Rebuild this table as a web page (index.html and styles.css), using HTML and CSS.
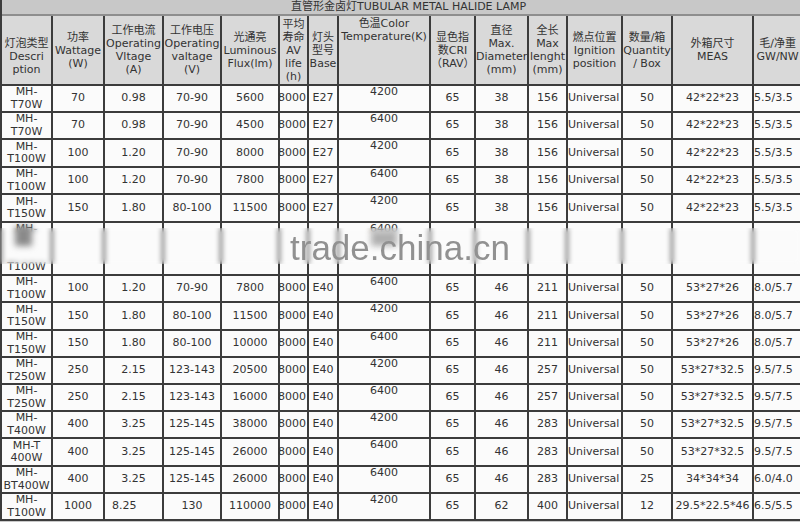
FILE: index.html
```html
<!DOCTYPE html>
<html>
<head>
<meta charset="utf-8">
<link rel="stylesheet" href="styles.css">
</head>
<body>
<div class="sheet">
<table class="spec">
<colgroup>
<col class="c1"><col class="c2"><col class="c3"><col class="c4"><col class="c5"><col class="c6"><col class="c7"><col class="c8"><col class="c9"><col class="c10"><col class="c11"><col class="c12"><col class="c13"><col class="c14"><col class="c15">
</colgroup>
<tr class="r-title"><td class="ttl" colspan="15">直管形金卤灯TUBULAR METAL HALIDE LAMP</td></tr>
<tr class="r-head">
<td class="hd"><br>灯泡类型<br>Descri<br>ption</td>
<td class="hd">功率<br>Wattage<br>(W)</td>
<td class="hd">工作电流<br>Operating<br>Vltage<br>(A)</td>
<td class="hd">工作电压<br>Operating<br>valtage<br>(V)</td>
<td class="hd">光通亮<br>Luminous<br>Flux(lm)</td>
<td class="hd">平均<br>寿命<br>AV<br>life<br>(h)</td>
<td class="hd">灯头<br>型号<br>Base</td>
<td class="hd top">色温Color<br>Temperature(K)</td>
<td class="hd">显色指<br>数CRI<br>（RAV）</td>
<td class="hd">直径<br>Max.<br>Diameter<br>(mm)</td>
<td class="hd">全长<br>Max<br>lenght<br>(mm)</td>
<td class="hd">燃点位置<br>Ignition<br>position</td>
<td class="hd">数量/箱<br>Quantity<br>/ Box</td>
<td class="hd">外箱尺寸<br>MEAS</td>
<td class="hd">毛/净重<br>GW/NW</td>
</tr>
<tr class="h27"><td>MH-<br>T70W</td><td>70</td><td>0.98</td><td>70-90</td><td>5600</td><td class="life">8000</td><td>E27</td><td class="top">4200</td><td>65</td><td>38</td><td>156</td><td class="ign">Universal</td><td>50</td><td>42*22*23</td><td class="gw">5.5/3.5</td></tr>
<tr class="h27"><td>MH-<br>T70W</td><td>70</td><td>0.98</td><td>70-90</td><td>4500</td><td class="life">8000</td><td>E27</td><td class="top">6400</td><td>65</td><td>38</td><td>156</td><td class="ign">Universal</td><td>50</td><td>42*22*23</td><td class="gw">5.5/3.5</td></tr>
<tr class="h28"><td>MH-<br>T100W</td><td>100</td><td>1.20</td><td>70-90</td><td>8000</td><td class="life">8000</td><td>E27</td><td class="top">4200</td><td>65</td><td>38</td><td>156</td><td class="ign">Universal</td><td>50</td><td>42*22*23</td><td class="gw">5.5/3.5</td></tr>
<tr class="h27"><td>MH-<br>T100W</td><td>100</td><td>1.20</td><td>70-90</td><td>7800</td><td class="life">8000</td><td>E27</td><td class="top">6400</td><td>65</td><td>38</td><td>156</td><td class="ign">Universal</td><td>50</td><td>42*22*23</td><td class="gw">5.5/3.5</td></tr>
<tr class="h28"><td>MH-<br>T150W</td><td>150</td><td>1.80</td><td>80-100</td><td>11500</td><td class="life">8000</td><td>E27</td><td class="top">4200</td><td>65</td><td>38</td><td>156</td><td class="ign">Universal</td><td>50</td><td>42*22*23</td><td class="gw">5.5/3.5</td></tr>
<tr class="h53"><td class="top">MH-<br><br><br>T100W</td><td></td><td></td><td></td><td></td><td></td><td></td><td class="top">6400</td><td></td><td></td><td></td><td></td><td></td><td></td><td></td></tr>
<tr class="h27"><td>MH-<br>T100W</td><td>100</td><td>1.20</td><td>70-90</td><td>7800</td><td class="life">8000</td><td>E40</td><td class="top">6400</td><td>65</td><td>46</td><td>211</td><td class="ign">Universal</td><td>50</td><td>53*27*26</td><td class="gw">8.0/5.7</td></tr>
<tr class="h28"><td>MH-<br>T150W</td><td>150</td><td>1.80</td><td>80-100</td><td>11500</td><td class="life">8000</td><td>E40</td><td class="top">4200</td><td>65</td><td>46</td><td>211</td><td class="ign">Universal</td><td>50</td><td>53*27*26</td><td class="gw">8.0/5.7</td></tr>
<tr class="h27"><td>MH-<br>T150W</td><td>150</td><td>1.80</td><td>80-100</td><td>10000</td><td class="life">8000</td><td>E40</td><td class="top">6400</td><td>65</td><td>46</td><td>211</td><td class="ign">Universal</td><td>50</td><td>53*27*26</td><td class="gw">8.0/5.7</td></tr>
<tr class="h27"><td>MH-<br>T250W</td><td>250</td><td>2.15</td><td>123-143</td><td>20500</td><td class="life">8000</td><td>E40</td><td class="top">4200</td><td>65</td><td>46</td><td>257</td><td class="ign">Universal</td><td>50</td><td>53*27*32.5</td><td class="gw">9.5/7.5</td></tr>
<tr class="h27"><td>MH-<br>T250W</td><td>250</td><td>2.15</td><td>123-143</td><td>16000</td><td class="life">8000</td><td>E40</td><td class="top">6400</td><td>65</td><td>46</td><td>257</td><td class="ign">Universal</td><td>50</td><td>53*27*32.5</td><td class="gw">9.5/7.5</td></tr>
<tr class="h27"><td>MH-<br>T400W</td><td>400</td><td>3.25</td><td>125-145</td><td>38000</td><td class="life">8000</td><td>E40</td><td class="top">4200</td><td>65</td><td>46</td><td>283</td><td class="ign">Universal</td><td>50</td><td>53*27*32.5</td><td class="gw">9.5/7.5</td></tr>
<tr class="h28"><td>MH-T<br>400W</td><td>400</td><td>3.25</td><td>125-145</td><td>26000</td><td class="life">8000</td><td>E40</td><td class="top">6400</td><td>65</td><td>46</td><td>283</td><td class="ign">Universal</td><td>50</td><td>53*27*32.5</td><td class="gw">9.5/7.5</td></tr>
<tr class="h27"><td>MH-<br>BT400W</td><td>400</td><td>3.25</td><td>125-145</td><td>26000</td><td class="life">8000</td><td>E40</td><td class="top">6400</td><td>65</td><td>46</td><td>283</td><td class="ign">Universal</td><td>25</td><td>34*34*34</td><td class="gw">6.0/4.0</td></tr>
<tr class="h27"><td>MH-<br>T100W</td><td>1000</td><td class="lft">8.25</td><td>130</td><td>110000</td><td class="life">8000</td><td>E40</td><td class="top">4200</td><td>65</td><td>62</td><td>400</td><td class="ign">Universal</td><td>12</td><td>29.5*22.5*46</td><td class="gw">6.5/5.5</td></tr>
</table>
<div class="smudge"></div>
<div class="blob blob-a"></div>
<div class="blob blob-b"></div>
<div class="watermark">trade.china.cn</div>
</div>
</body>
</html>
```
FILE: styles.css
```css
html, body {
  margin: 0;
  padding: 0;
}
body {
  background: #c9c9c9;
  overflow: hidden;
  font-family: "DejaVu Sans", "Noto Sans CJK SC", sans-serif;
  font-size: 11px;
  color: #333;
}
.sheet {
  position: relative;
  width: 803px;
}
.spec {
  table-layout: fixed;
  border-collapse: separate;
  border-spacing: 0;
  width: 803px;
  border-left: 2px solid #3c3c3c;
}
.c1 { width: 51px; }
.c2 { width: 52px; }
.c3 { width: 59px; }
.c4 { width: 58px; }
.c5 { width: 58px; }
.c6 { width: 29px; }
.c7 { width: 30px; }
.c8 { width: 92px; }
.c9 { width: 45px; }
.c10 { width: 53px; }
.c11 { width: 39px; }
.c12 { width: 55px; }
.c13 { width: 50px; }
.c14 { width: 81px; }
.c15 { width: 49px; }

.spec td {
  padding: 0;
  border-right: 2px solid #3c3c3c;
  border-bottom: 2px solid #3c3c3c;
  text-align: center;
  vertical-align: middle;
  white-space: nowrap;
  line-height: 12.5px;
  background: #fbfbfb;
}
.r-title { height: 16px; }
.r-head { height: 70px; }
.h27 { height: 27px; }
.h28 { height: 28px; }
.h53 { height: 53px; }

.spec td.ttl {
  background: #c8c8c8;
  border-right: none;
  border-bottom: 2px solid #8e8e8e;
  line-height: 14px;
  padding-left: 12px;
}
.spec td.hd {
  background: #d9d9d9;
  line-height: 13px;
}
.spec td.top {
  vertical-align: top;
}
.spec td.hd.top {
  padding-top: 1px;
}
.spec td.life {
  text-align: left;
  text-indent: -2px;
}
.spec td.ign {
  text-align: left;
}
.spec td.gw {
  text-align: left;
}
.spec td.lft {
  text-align: left;
  padding-left: 7px;
}

.smudge {
  position: absolute;
  left: 0;
  top: 228px;
  width: 803px;
  height: 36px;
  backdrop-filter: blur(2.5px);
}
.blob {
  position: absolute;
  filter: blur(3px);
}
.blob-a {
  left: 15px;
  top: 226px;
  width: 17px;
  height: 20px;
  background: #8a8a8a;
}
.blob-b {
  left: 371px;
  top: 231px;
  width: 26px;
  height: 15px;
  background: #b0b0b0;
}
.watermark {
  position: absolute;
  left: 290px;
  top: 236px;
  font-family: "Liberation Sans", Arial, sans-serif;
  font-size: 35px;
  line-height: 24px;
  color: #919191;
  white-space: nowrap;
}
```
